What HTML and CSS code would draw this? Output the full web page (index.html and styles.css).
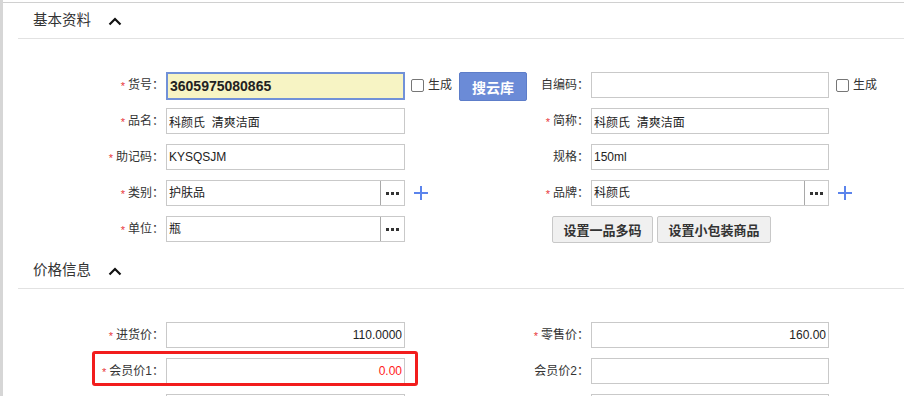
FILE: index.html
```html
<!DOCTYPE html>
<html lang="zh-CN">
  <head>
    <meta charset="UTF-8" />
    <title>商品资料</title>
    <link rel="stylesheet" href="styles.css">
  </head>
  <body>
    <div class="pagina">
      <!-- Basic info -->
      <div class="seccion">
        <div class="cabecera">
          <span class="titulo">基本资料</span>
          <svg class="chevron" width="14" height="9" viewBox="0 0 14 9"><path d="M1.5 7.5 L7 2 L12.5 7.5" fill="none" stroke="#111" stroke-width="2.2"/></svg>
        </div>
        <div class="formulario">
          <div class="fila">
            <div class="celda izq">
              <label class="etiqueta"><i class="req">*</i>货号：</label>
              <input class="campo campo-activo" type="text" value="3605975080865" />
              <span class="check"></span><span class="check-texto">生成</span>
              <button class="boton-azul">搜云库</button>
            </div>
            <div class="celda der">
              <label class="etiqueta">自编码：</label>
              <input class="campo campo-der" type="text" value="" />
              <span class="check check-der"></span><span class="check-texto">生成</span>
            </div>
          </div>
          <div class="fila">
            <div class="celda izq">
              <label class="etiqueta"><i class="req">*</i>品名：</label>
              <input class="campo" type="text" value="科颜氏  清爽洁面" />
            </div>
            <div class="celda der">
              <label class="etiqueta"><i class="req">*</i>简称：</label>
              <input class="campo campo-der" type="text" value="科颜氏  清爽洁面" />
            </div>
          </div>
          <div class="fila">
            <div class="celda izq">
              <label class="etiqueta"><i class="req">*</i>助记码：</label>
              <input class="campo" type="text" value="KYSQSJM" />
            </div>
            <div class="celda der">
              <label class="etiqueta">规格：</label>
              <input class="campo campo-der" type="text" value="150ml" />
            </div>
          </div>
          <div class="fila">
            <div class="celda izq">
              <label class="etiqueta"><i class="req">*</i>类别：</label>
              <div class="selector">
                <span class="selector-valor">护肤品</span>
                <span class="mas"><b></b><b></b><b></b></span>
              </div>
              <svg class="agregar" width="16" height="16" viewBox="0 0 16 16"><path d="M8 1 V15 M1 8 H15" stroke="#5b84ec" stroke-width="2"/></svg>
            </div>
            <div class="celda der">
              <label class="etiqueta"><i class="req">*</i>品牌：</label>
              <div class="selector selector-der">
                <span class="selector-valor">科颜氏</span>
                <span class="mas"><b></b><b></b><b></b></span>
              </div>
              <svg class="agregar" width="16" height="16" viewBox="0 0 16 16"><path d="M8 1 V15 M1 8 H15" stroke="#5b84ec" stroke-width="2"/></svg>
            </div>
          </div>
          <div class="fila">
            <div class="celda izq">
              <label class="etiqueta"><i class="req">*</i>单位：</label>
              <div class="selector">
                <span class="selector-valor">瓶</span>
                <span class="mas"><b></b><b></b><b></b></span>
              </div>
            </div>
            <div class="celda der">
              <div class="botones">
                <button class="boton-gris boton-codigos">设置一品多码</button>
                <button class="boton-gris boton-paquete">设置小包装商品</button>
              </div>
            </div>
          </div>
        </div>
      </div>

      <!-- Prices -->
      <div class="seccion">
        <div class="cabecera">
          <span class="titulo">价格信息</span>
          <svg class="chevron" width="14" height="9" viewBox="0 0 14 9"><path d="M1.5 7.5 L7 2 L12.5 7.5" fill="none" stroke="#111" stroke-width="2.2"/></svg>
        </div>
        <div class="formulario">
          <div class="fila">
            <div class="celda izq">
              <label class="etiqueta"><i class="req">*</i>进货价：</label>
              <input class="campo numero" type="text" value="110.0000" />
            </div>
            <div class="celda der">
              <label class="etiqueta"><i class="req">*</i>零售价：</label>
              <input class="campo campo-der numero" type="text" value="160.00" />
            </div>
          </div>
          <div class="fila">
            <div class="celda izq">
              <label class="etiqueta"><i class="req">*</i>会员价1：</label>
              <input class="campo numero rojo" type="text" value="0.00" />
              <span class="marca"></span>
            </div>
            <div class="celda der">
              <label class="etiqueta">会员价2：</label>
              <input class="campo campo-der numero" type="text" value="" />
            </div>
          </div>
          <!-- siguiente fila, apenas visible -->
          <div class="fila">
            <div class="celda izq">
              <label class="etiqueta"></label>
              <input class="campo numero" type="text" value="" />
            </div>
            <div class="celda der">
              <label class="etiqueta"></label>
              <input class="campo campo-der numero" type="text" value="" />
            </div>
          </div>
        </div>
      </div>
    </div>
  </body>
</html>
```

FILE: styles.css
```css
html, body {
  margin: 0;
  background: #fff;
  height: 396px;
  overflow: hidden;
}
body {
  font-family: "Liberation Sans", "Noto Sans CJK SC", sans-serif;
  font-size: 12px;
  color: #333;
  border-left: 3px solid #d6d6d6;
  box-sizing: border-box;
}

.pagina {
  margin-top: 2px;
  border-top: 1px solid #d0d0d0;
}

.seccion {
  margin-left: 15px; /* linea separadora arranca en x=18 */
}

.cabecera {
  display: flex;
  align-items: center;
  height: 35px;
  padding-left: 15px;
  border-bottom: 1px solid #e2e2e2;
}
.titulo {
  font-size: 14.5px;
  color: #333;
  line-height: 35px;
}
.chevron {
  margin-left: 17px;
  margin-top: 1px;
}

.formulario {
  padding-top: 33px;
  padding-bottom: 11px;
}

.fila {
  display: flex;
  height: 26px;
  margin-bottom: 10px;
}
.fila:last-child {
  margin-bottom: 0;
}

.celda {
  display: flex;
  align-items: center;
  height: 26px;
  position: relative;
}
.izq {
  width: 510px;
}
.izq .etiqueta {
  width: 146px;
}
.der .etiqueta {
  width: 61px;
}

.etiqueta {
  margin-right: 2px;
  text-align: right;
  white-space: nowrap;
  line-height: 26px;
  color: #333;
}
.req {
  font-style: normal;
  color: #e8373b;
  font-size: 11px;
  margin-right: 3px;
  position: relative;
  top: 1px;
}

.campo {
  box-sizing: border-box;
  width: 239px;
  height: 26px;
  border: 1px solid #c9c9c9;
  padding: 0 2px;
  font: inherit;
  font-size: 12px;
  color: #222;
  background: #fff;
  outline: none;
}
.campo-der {
  width: 238px;
}
.campo-activo {
  height: 28px;
  border: 2px solid #7191d8;
  background: #f7f4c4;
  font-size: 14px;
  font-weight: bold;
  color: #222;
  margin-top: 1px;
}
.numero {
  text-align: right;
  padding-right: 2px;
}
.rojo {
  color: #ff1a1a;
}

.check {
  box-sizing: border-box;
  width: 13px;
  height: 13px;
  border: 1px solid #767676;
  border-radius: 2px;
  margin-left: 6px;
  margin-right: 4px;
  background: #fff;
}
.check-der {
  margin-left: 7px;
}
.check-texto {
  color: #333;
  line-height: 26px;
}

.boton-azul {
  box-sizing: border-box;
  margin-left: 7px;
  width: 68px;
  height: 29px;
  margin-top: 3px;
  background: #6b8bd7;
  border: 1px solid #5d7dc9;
  border-radius: 2px;
  color: #fff;
  font: inherit;
  font-size: 14px;
  font-weight: bold;
  padding: 0;
}

.selector {
  box-sizing: border-box;
  display: flex;
  width: 239px;
  height: 26px;
  border: 1px solid #c9c9c9;
  background: #fff;
}
.selector-der {
  width: 238px;
}
.selector-valor {
  flex: 1;
  padding-left: 2px;
  line-height: 24px;
  color: #222;
}
.mas {
  width: 23px;
  border-left: 1px solid #a9a9a9;
  display: flex;
  align-items: center;
  justify-content: center;
  gap: 2px;
}
.mas b {
  width: 3px;
  height: 3px;
  background: #333;
}
.agregar {
  margin-left: 8px;
}

.botones {
  display: flex;
  gap: 4px;
  margin-left: 24px;
  align-self: flex-start;
}
.boton-gris {
  box-sizing: border-box;
  height: 27px;
  background: #f0f0f0;
  border: 1px solid #c8c8c8;
  border-radius: 2px;
  color: #333;
  font: inherit;
  font-size: 13px;
  font-weight: bold;
  padding: 0;
}
.boton-codigos {
  width: 101px;
}
.boton-paquete {
  width: 114px;
}

/* recuadro rojo de anotacion */
.marca {
  position: absolute;
  left: 74px;
  top: -7px;
  width: 326px;
  height: 35px;
  box-sizing: border-box;
  border: 3px solid #f21d1d;
  border-radius: 3px;
  pointer-events: none;
}
```
